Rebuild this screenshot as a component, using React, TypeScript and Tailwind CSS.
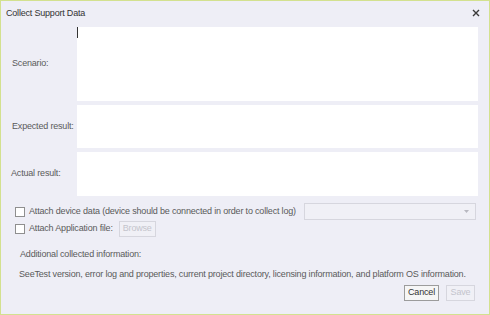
import React from "react";

export default function App() {
  const font = { fontFamily: '"Liberation Sans", Arial, sans-serif' };
  return (
    <div
      style={font}
      className="w-[490px] h-[315px] border border-[#d3e18f] bg-[#eeeef6] flex flex-col text-[9px] tracking-[-0.18px] text-[#5a5a5a] overflow-hidden"
    >
      {/* Title bar */}
      <div className="h-[26px] flex items-center justify-between pl-[5px] pr-[8px] shrink-0">
        <span className="text-[9px] tracking-[-0.2px] text-[#333]">Collect Support Data</span>
        <svg width="8" height="8" viewBox="0 0 8 8" className="mt-[-2px] mr-[1px]">
          <path d="M1 1 L7 7 M7 1 L1 7" stroke="#3a3a3a" strokeWidth="1.4" />
        </svg>
      </div>

      {/* Text areas */}
      <div className="flex flex-col gap-[4px] pr-[11px]">
        <div className="flex h-[74px]">
          <div className="w-[76px] pl-[11px] flex items-center">Scenario:</div>
          <div className="flex-1 bg-white relative">
            <div className="absolute left-0 top-0 w-[1px] h-[11px] bg-[#333]" />
          </div>
        </div>
        <div className="flex h-[43px]">
          <div className="w-[76px] pl-[11px] flex items-center whitespace-nowrap">Expected result:</div>
          <div className="flex-1 bg-white" />
        </div>
        <div className="flex h-[44px]">
          <div className="w-[76px] pl-[10px] flex items-center">Actual result:</div>
          <div className="flex-1 bg-white" />
        </div>
      </div>

      {/* Options */}
      <div className="flex flex-col pl-[14px] pr-[13px] mt-[7px]">
        <div className="flex items-center h-[17px]">
          <div className="w-[10px] h-[10px] border border-[#8f8f8f] bg-white shrink-0" />
          <span className="ml-[4px] flex-1 whitespace-nowrap">
            Attach device data (device should be connected in order to collect log)
          </span>
          <div className="w-[172px] h-[17px] border border-[#d6d6de] bg-[#f0f0f6] flex items-center justify-end pr-[6px]">
            <svg width="5" height="3" viewBox="0 0 5 3">
              <path d="M0 0 L5 0 L2.5 3 Z" fill="#b8b8c0" />
            </svg>
          </div>
        </div>
        <div className="flex items-center h-[16px] mt-[1px]">
          <div className="w-[10px] h-[10px] border border-[#8f8f8f] bg-white shrink-0" />
          <span className="ml-[4px] whitespace-nowrap">Attach Application file:</span>
          <div className="ml-[6px] h-[16px] w-[37px] border border-[#d6d6de] bg-[#f0f0f6] flex items-center justify-center text-[#c4c4cc]">
            Browse
          </div>
        </div>
      </div>

      <div className="pl-[19px] mt-[11px] whitespace-nowrap">Additional collected information:</div>
      <div className="pl-[18px] mt-[6px] whitespace-nowrap">
        SeeTest version, error log and properties, current project directory, licensing information, and platform OS information.
      </div>

      <div className="flex justify-end gap-[7px] pr-[14px] mt-[4px]">
        <div className="h-[16px] w-[35px] border border-[#9c9c9c] bg-[#f6f6f6] flex items-center justify-center text-[#333]">
          Cancel
        </div>
        <div className="h-[16px] w-[29px] border border-[#d6d6de] bg-[#f0f0f6] flex items-center justify-center text-[#c4c4cc]">
          Save
        </div>
      </div>
    </div>
  );
}
